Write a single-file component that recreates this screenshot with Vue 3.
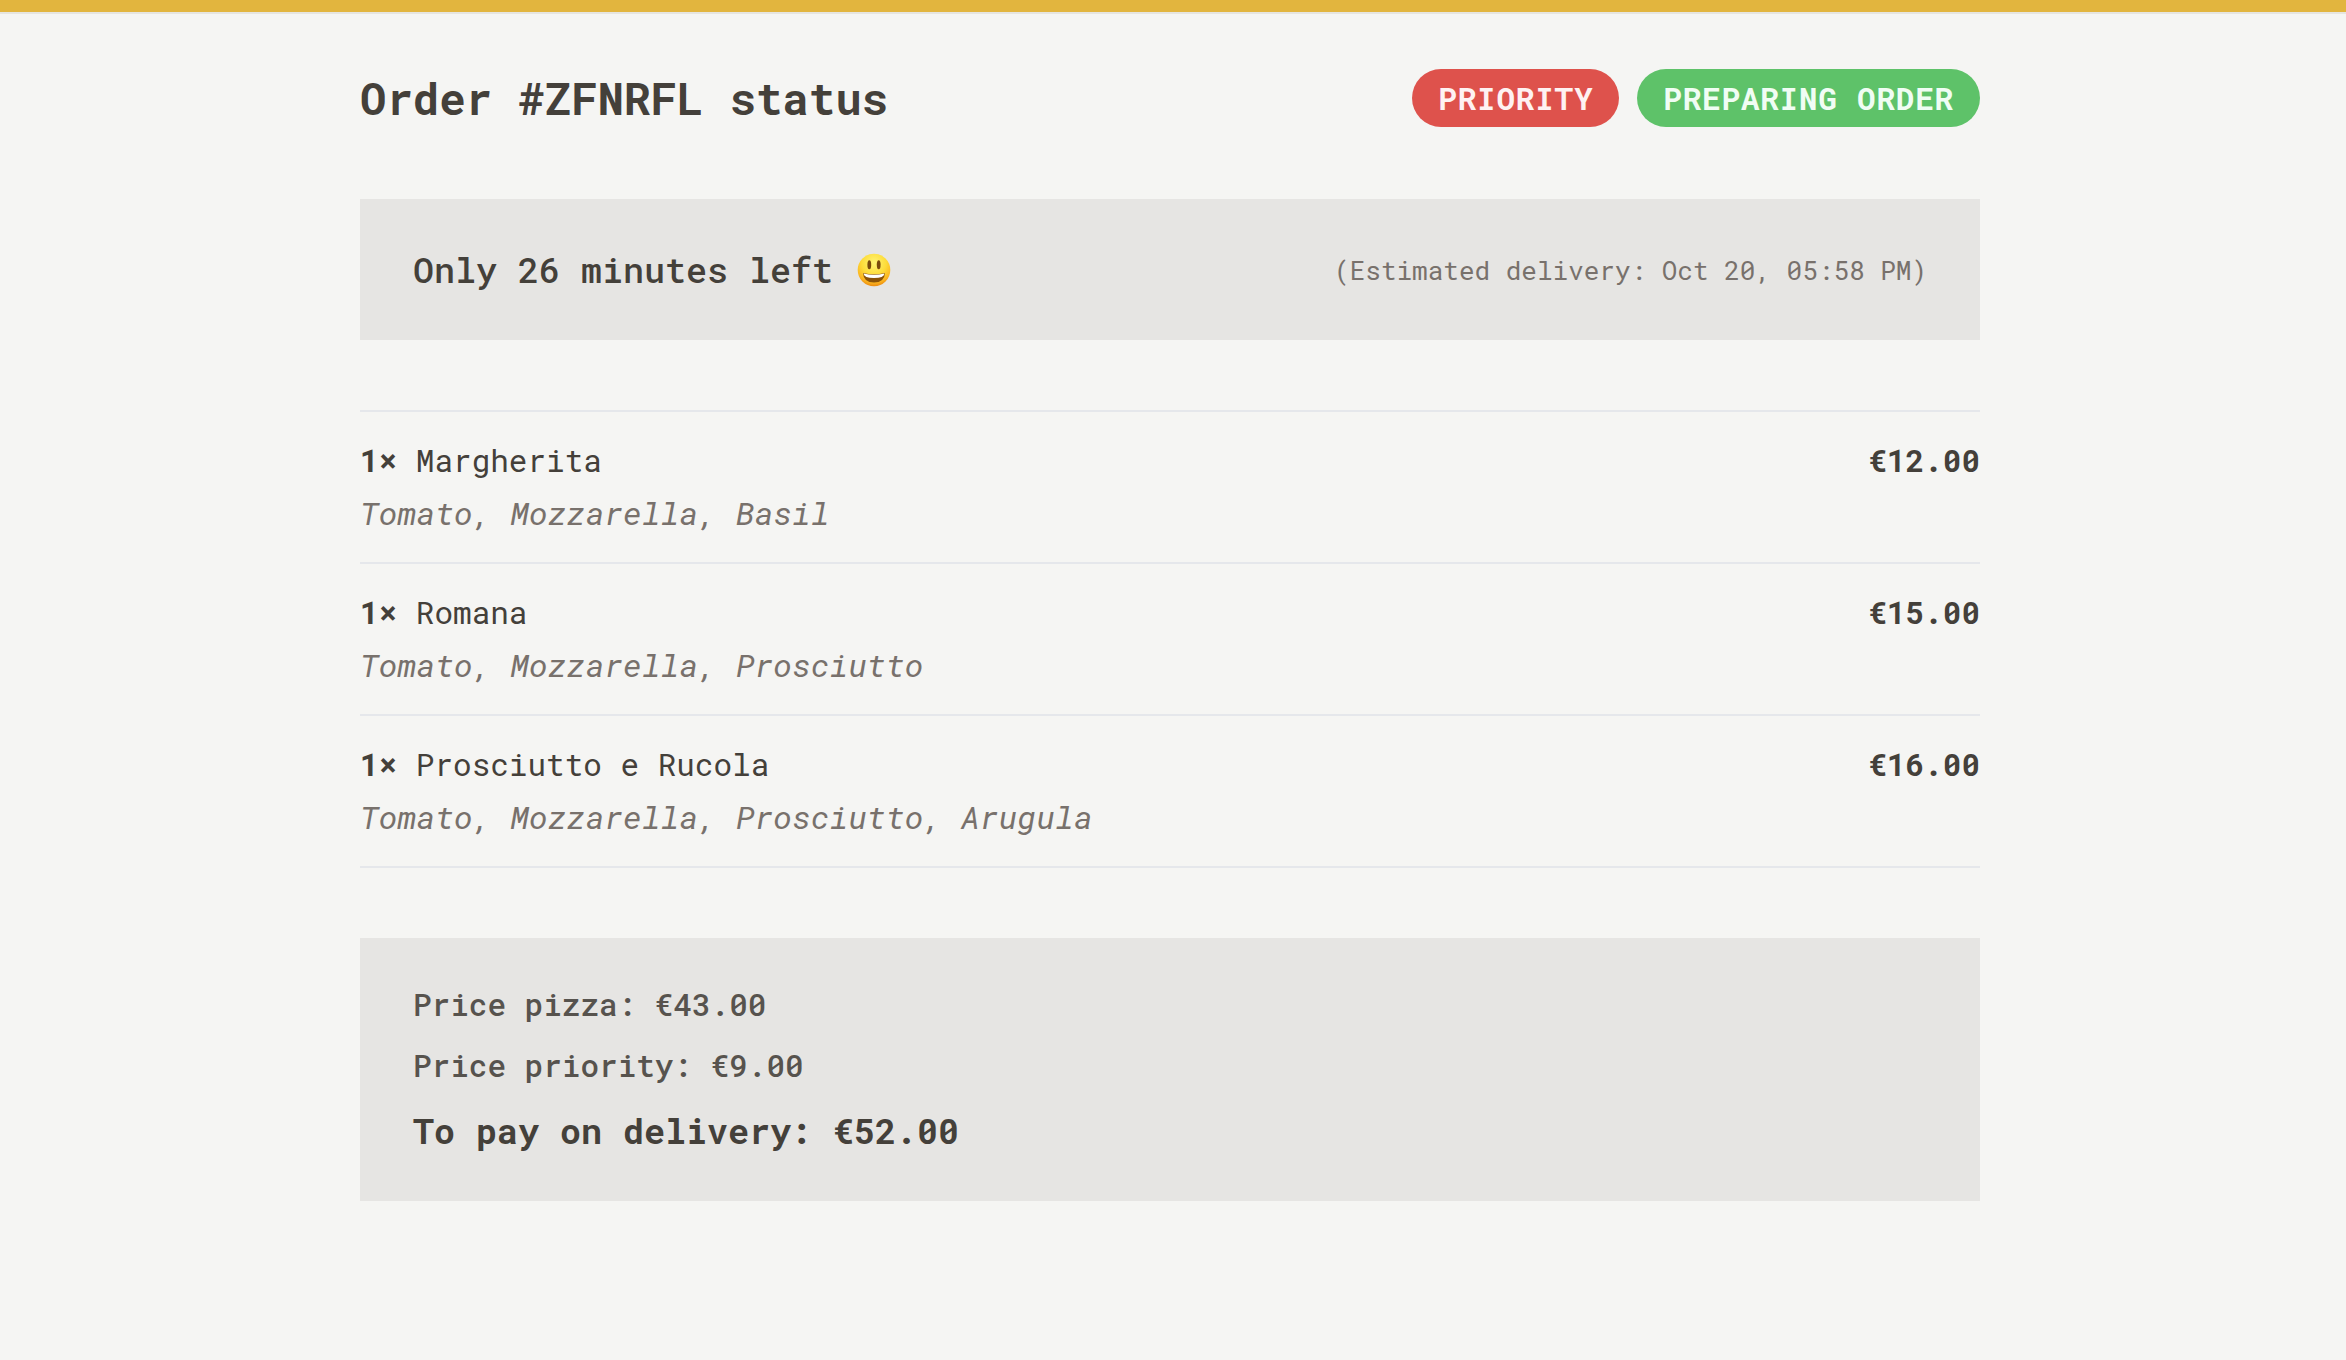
<script setup>
const items = [
  { quantity: 1, name: 'Margherita', ingredients: 'Tomato, Mozzarella, Basil', price: '€12.00' },
  { quantity: 1, name: 'Romana', ingredients: 'Tomato, Mozzarella, Prosciutto', price: '€15.00' },
  { quantity: 1, name: 'Prosciutto e Rucola', ingredients: 'Tomato, Mozzarella, Prosciutto, Arugula', price: '€16.00' },
]
</script>

<template>
  <div class="page">
    <div class="accent"></div>
    <div class="scroller">
      <main class="order">
        <header class="heading">
          <h1>Order #ZFNRFL status</h1>
          <div class="badges">
            <span class="badge priority">PRIORITY</span>
            <span class="badge status">PREPARING ORDER</span>
          </div>
        </header>

        <section class="panel eta">
          <p class="remaining">
            <span>Only 26 minutes left</span>
            <svg class="smiley" viewBox="0 0 34 34" role="img" aria-label="Smiling face">
              <defs>
                <radialGradient id="face" cx="50%" cy="28%" r="74%">
                  <stop offset="0" stop-color="#fff475" />
                  <stop offset="0.5" stop-color="#fddc3a" />
                  <stop offset="0.82" stop-color="#fbb41f" />
                  <stop offset="1" stop-color="#e8820c" />
                </radialGradient>
              </defs>
              <circle cx="17" cy="17" r="16.300" fill="url(#face)" />
              <ellipse cx="12.300" cy="11.800" rx="1.900" ry="4.500" fill="#7a4a0c" />
              <ellipse cx="21.700" cy="11.800" rx="1.900" ry="4.500" fill="#7a4a0c" />
              <path d="M6 20Q17 22.500 28 20Q27.500 29.500 17 29.500Q6.500 29.500 6 20Z" fill="#8a5208" />
              <path d="M6.500 20.500Q17 23 27.500 20.500Q27 25 17 25Q7 25 6.500 20.500Z" fill="#fff" />
            </svg>
          </p>
          <p class="estimate">(Estimated delivery: Oct 20, 05:58 PM)</p>
        </section>

        <ul class="items">
          <li v-for="item in items" :key="item.name" class="item">
            <div class="line">
              <p><strong>{{ item.quantity }}×</strong> {{ item.name }}</p>
              <p class="price">{{ item.price }}</p>
            </div>
            <p class="ingredients">{{ item.ingredients }}</p>
          </li>
        </ul>

        <section class="panel totals">
          <p>Price pizza: €43.00</p>
          <p>Price priority: €9.00</p>
          <p class="due">To pay on delivery: €52.00</p>
        </section>
      </main>
    </div>
  </div>
</template>

<style>
body {
  margin: 0;
  background: #f5f5f3;
}
</style>

<style scoped>
.page {
  min-height: 100vh;
  background: #f5f5f3;
  color: #44403a;
  font-family: "Roboto Mono", "DejaVu Sans Mono", monospace;
  font-size: 31px;
  line-height: 44px;
}

h1,
p,
ul {
  margin: 0;
  padding: 0;
}

.accent {
  height: 12px;
  background: #e2b53e;
  border-bottom: 2px solid #e6e5e0;
}

.scroller {
  padding-right: 6px;
}

.order {
  display: flex;
  flex-direction: column;
  gap: 70px;
  box-sizing: border-box;
  max-width: 1692px;
  margin: 0 auto;
  padding: 53px 36px;
}

.heading,
.eta,
.line {
  display: flex;
  align-items: center;
  justify-content: space-between;
}

h1 {
  font-size: 44px;
  line-height: 62px;
  font-weight: 700;
}

.badges {
  display: flex;
  gap: 18px;
}

.badge {
  padding: 7px 26px;
  border-radius: 29px;
  font-weight: 700;
  letter-spacing: 0.025em;
}

.priority {
  background: #de524c;
  color: #fef2f2;
}

.status {
  background: #5ec269;
  color: #f0fdf4;
}

.panel {
  padding: 44px 53px;
  background: #e6e5e3;
}

.remaining {
  display: flex;
  align-items: center;
  gap: 24px;
  font-size: 35px;
  line-height: 53px;
  font-weight: 500;
}

.smiley {
  width: 34px;
  height: 34px;
}

.estimate {
  color: #78716c;
  font-size: 26px;
}

.items {
  list-style: none;
  border-top: 2px solid #e5e7eb;
}

.item {
  display: flex;
  flex-direction: column;
  gap: 9px;
  padding: 26px 0 27px;
  border-bottom: 2px solid #e5e7eb;
}

.price {
  font-weight: 700;
}

.ingredients {
  color: #78716c;
  font-size: 32px;
  font-style: italic;
}

.totals {
  display: flex;
  flex-direction: column;
  gap: 17px;
  color: #57534e;
  font-weight: 500;
}

.due {
  color: #44403a;
  font-size: 35px;
  line-height: 53px;
  font-weight: 700;
}
</style>
